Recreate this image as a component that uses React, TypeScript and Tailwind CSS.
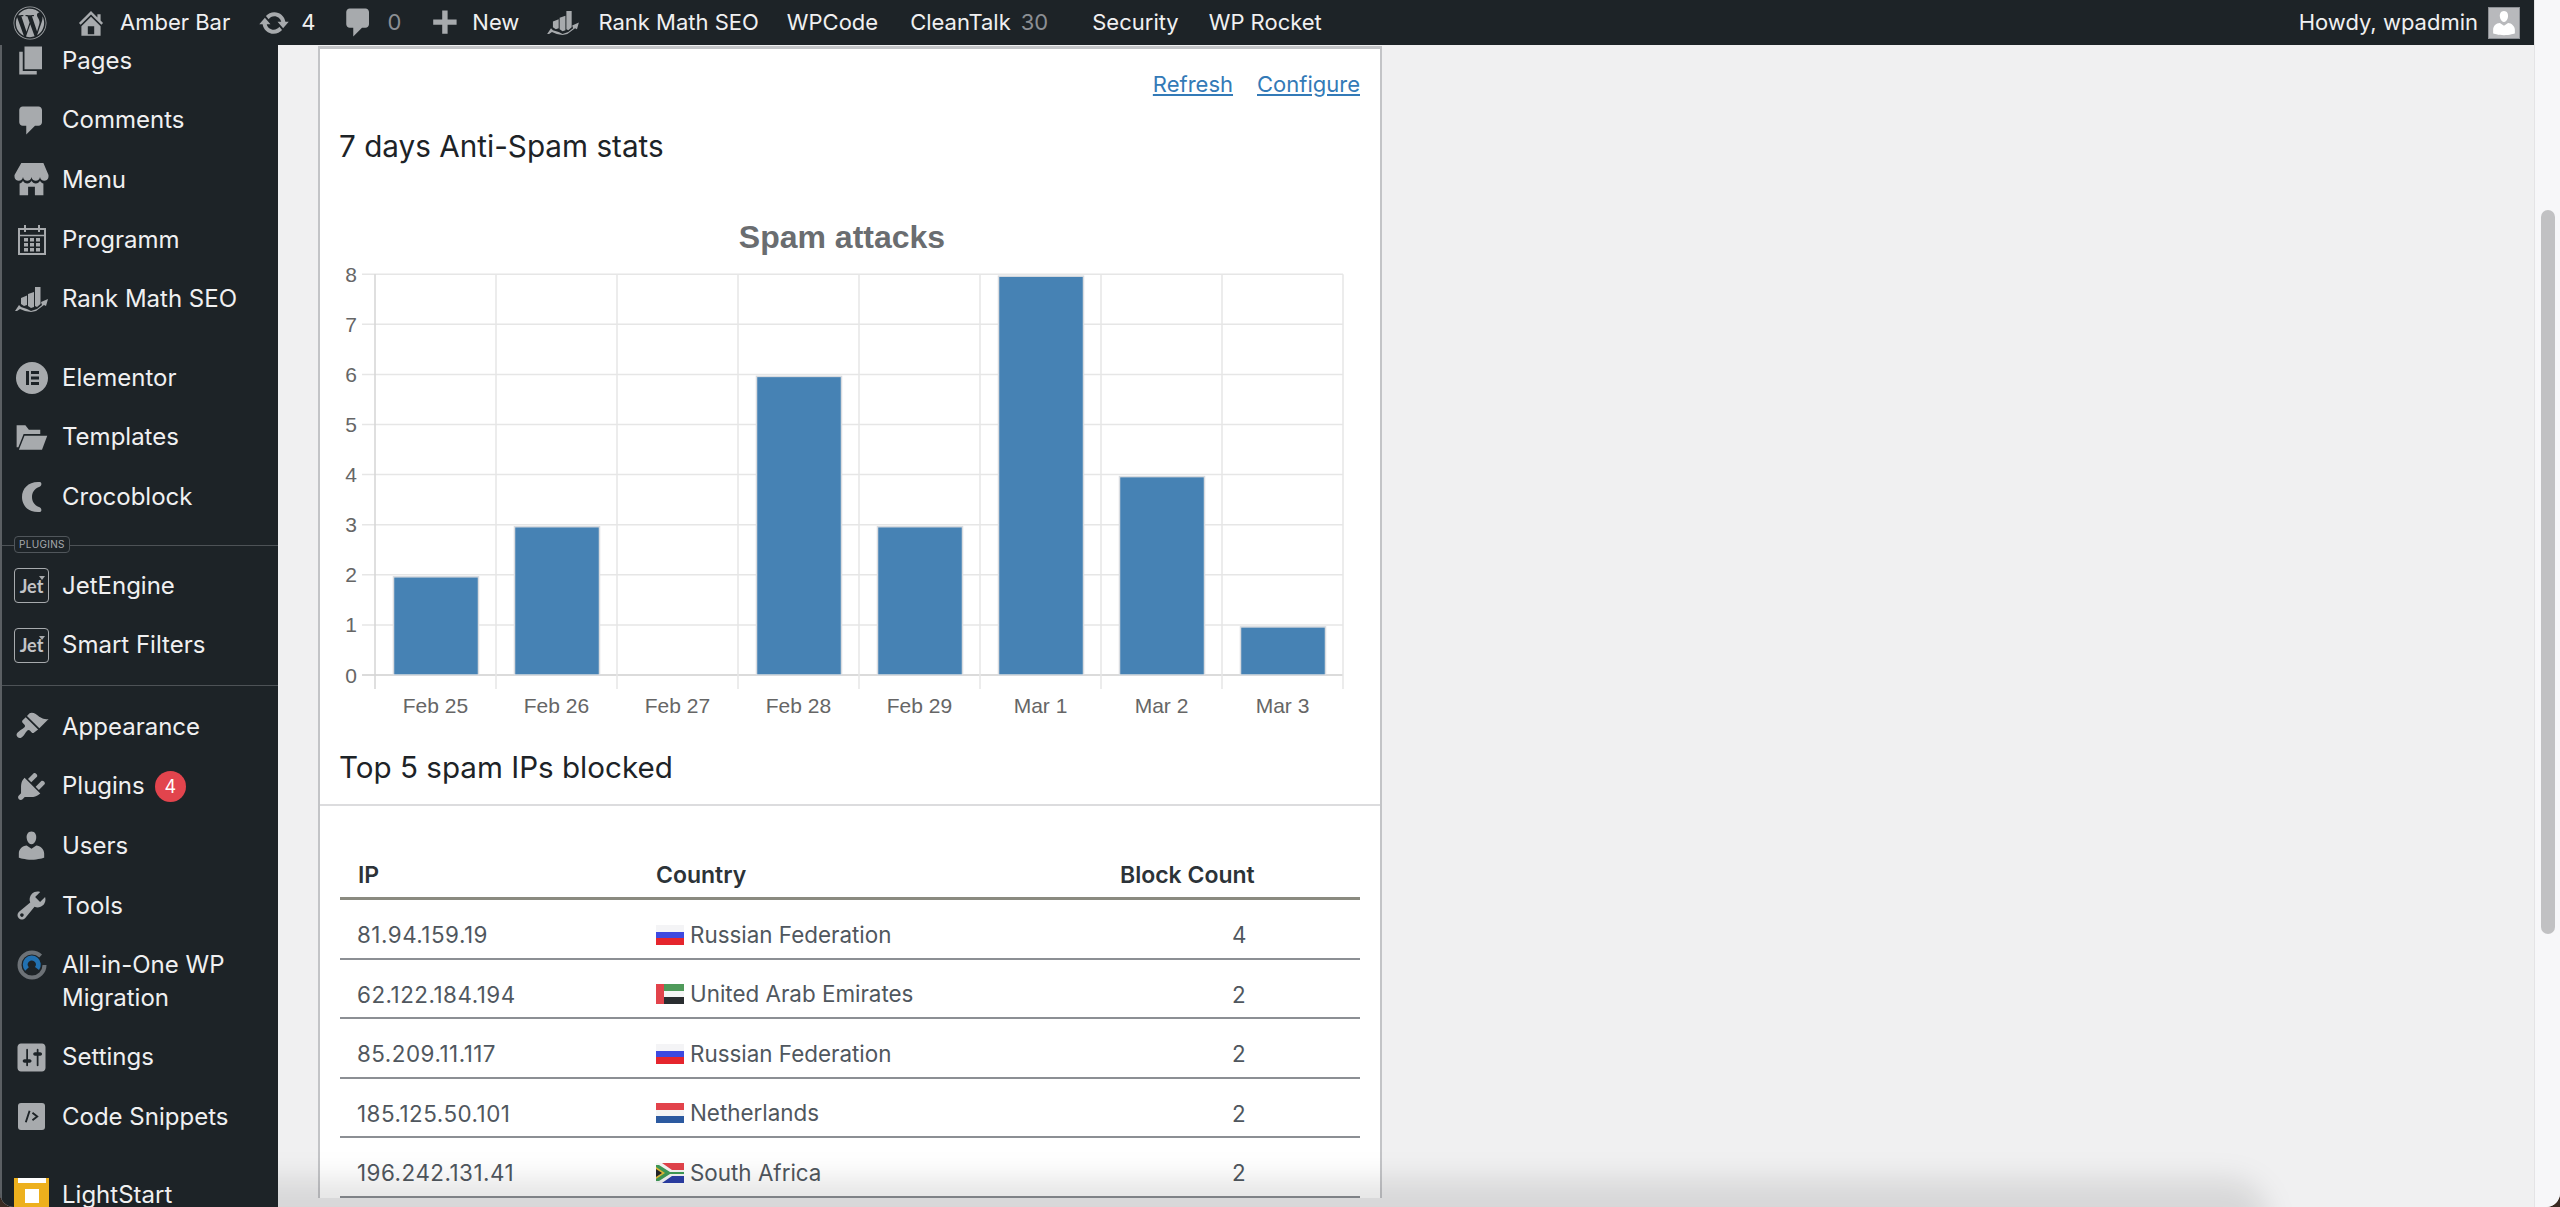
import { ReactNode } from "react";
import { FaWordpress } from "react-icons/fa";

const paths = {
  home: "M16 8.5l1.53 1.53-1.06 1.06L10 4.62l-6.47 6.47-1.06-1.06L10 2.5l4 4v-2h2v4zm-6-2.46l6 5.99V18H4v-5.97zM12 17v-5H8v5h4z",
  update:
    "M10.2 3.28c3.53 0 6.43 2.61 6.92 6h2.08l-3.5 4-3.5-4h2.32c-.45-1.97-2.21-3.45-4.32-3.45-1.45 0-2.73.71-3.54 1.78L4.95 5.66C6.23 4.2 8.11 3.28 10.2 3.28zm-.4 13.44c-3.52 0-6.43-2.61-6.92-6H.8l3.5-4c1.17 1.33 2.33 2.67 3.5 4H5.48c.45 1.97 2.21 3.45 4.32 3.45 1.45 0 2.73-.71 3.54-1.78l1.71 1.95c-1.28 1.46-3.15 2.38-5.25 2.38z",
  comment: "M5 2h9c1.1 0 2 .9 2 2v7c0 1.1-.9 2-2 2h-2l-5 5v-5H5c-1.1 0-2-.9-2-2V4c0-1.1.9-2 2-2z",
  plus: "M17 8v3h-5v5H9v-5H4V8h5V3h3v5h5z",
  page: "M6 15V2h10v13H6zm-1 1h8v2H3V5h2v11z",
  store:
    "M1 10c.41.29.96.43 1.5.43.55 0 1.09-.14 1.5-.43.62-.46 1-1.17 1-2 0 .83.37 1.54 1 2 .41.29.96.43 1.5.43.55 0 1.09-.14 1.5-.43.62-.46 1-1.17 1-2 0 .83.37 1.54 1 2 .41.29.96.43 1.51.43.54 0 1.08-.14 1.49-.43.62-.46 1-1.17 1-2 0 .83.37 1.54 1 2 .41.29.96.43 1.5.43.55 0 1.09-.14 1.5-.43.63-.46 1-1.17 1-2V7l-3-7H4L0 7v1c0 .83.37 1.54 1 2zm2 8.99h5v-5h4v5h5v-7c-.37-.05-.72-.22-1-.43-.63-.45-1-.73-1-1.56 0 .83-.38 1.11-1 1.56-.41.3-.95.43-1.49.44-.55 0-1.1-.14-1.51-.44-.63-.45-1-.73-1-1.56 0 .83-.38 1.11-1 1.56-.41.3-.95.43-1.5.44-.54 0-1.09-.14-1.5-.44-.63-.45-1-.73-1-1.57 0 .84-.38 1.12-1 1.57-.29.21-.63.38-1 .44v6.99z",
  brush:
    "M14.48 11.06L7.41 3.99l1.5-1.5c.5-.56 2.3-.47 3.51.32 1.21.8 1.43 1.28 2.91 2.1 1.18.64 2.45 1.26 4.45.85zm-.71.71L6.7 4.7 4.93 6.47c-.39.39-.39 1.02 0 1.41l1.06 1.06c.39.39.39 1.03 0 1.42-.6.6-1.43 1.11-2.21 1.69-.35.26-.7.53-1.01.84C1.43 13.71.99 15.01 2 16c1.01 1 2.29.57 3.1-.44.31-.31.59-.66.85-1.01.58-.78 1.09-1.61 1.69-2.21.39-.39 1.02-.39 1.41 0l1.06 1.06c.39.39 1.02.39 1.41 0z",
  plugin:
    "M13.11 4.36L9.87 7.6 8 5.73l3.24-3.24c.35-.34 1.05-.2 1.56.32.52.51.66 1.21.31 1.55zm-8 1.77l.91-1.12 9.01 9.01-1.19.84c-.71.71-2.63 1.16-3.82 1.16H6.14L4.9 17.26c-.59.59-1.54.59-2.12 0-.59-.58-.59-1.53 0-2.12l1.24-1.24v-3.88c0-1.13.4-3.19 1.09-3.89zm7.26 3.97l3.24-3.24c.34-.35 1.04-.21 1.55.31.52.51.66 1.21.31 1.55l-3.24 3.25z",
  users:
    "M10 9.25c-2.27 0-2.73-3.44-2.73-3.44C7 4.02 7.82 2 9.97 2c2.16 0 2.98 2.02 2.71 3.81 0 0-.41 3.44-2.68 3.44zm0 2.57L12.72 10c2.39 0 4.52 2.33 4.52 4.53v2.49s-3.65 1.13-7.24 1.13c-3.65 0-7.24-1.13-7.24-1.13v-2.49c0-2.25 1.94-4.48 4.47-4.48z",
  tools:
    "M16.68 9.77c-1.34 1.34-3.3 1.67-4.95.99l-5.41 6.52c-.99.99-2.59.99-3.58 0s-.99-2.59 0-3.57l6.52-5.42c-.68-1.65-.35-3.61.99-4.95 1.28-1.28 3.12-1.62 4.72-1.06l-2.89 2.89 2.82 2.82 2.86-2.87c.53 1.58.18 3.39-1.08 4.67zM3.81 16.21c.4.39 1.04.39 1.43 0 .4-.4.4-1.04 0-1.43-.39-.4-1.03-.4-1.43 0-.39.39-.39 1.03 0 1.43z",
  settings:
    "M18 16V4c0-1.1-.9-2-2-2H4c-1.1 0-2 .9-2 2v12c0 1.1.9 2 2 2h12c1.1 0 2-.9 2-2zM8 11h1c.55 0 1 .45 1 1s-.45 1-1 1H8v1.5c0 .28-.22.5-.5.5s-.5-.22-.5-.5V13H6c-.55 0-1-.45-1-1s.45-1 1-1h1V5.5c0-.28.22-.5.5-.5s.5.22.5.5V11zm5-2h-1c-.55 0-1-.45-1-1s.45-1 1-1h1V5.5c0-.28.22-.5.5-.5s.5.22.5.5V7h1c.55 0 1 .45 1 1s-.45 1-1 1h-1v5.5c0 .28-.22.5-.5.5s-.5-.22-.5-.5V9z",
  folder: "M1.5 3h5l2 2.5h6.5V8H5.5L2.5 15.5H1.5V3zM6 9h13l-3 8H2.8L6 9z",
};

function Dash({ d, className }: { d: string; className: string }) {
  return (
    <svg viewBox="0 0 20 20" className={className} fill="currentColor">
      <path d={d} />
    </svg>
  );
}

function RankIcon({ className }: { className: string }) {
  return (
    <svg viewBox="0 0 34 26" className={className} fill="currentColor">
      <path d="M6 12l6-2.500V19l-3 1-3-2zM13 8l6-2v15l-3 1-3-2zM20 1h5.500v17L22 21l-2-1z" />
      <path d="M0 25l4-6 2 2 6 2 4 2 6-2 5-4-1-3 7-3-2 7-2-1-8 6-5 1-6-1-5-2-3 2z" />
    </svg>
  );
}

function CalendarIcon() {
  return (
    <svg viewBox="0 0 28 30" className="w-[28px] h-[30px]" fill="none" stroke="currentColor">
      <rect x="1" y="4" width="26" height="25" strokeWidth="2" />
      <path d="M7 0v7M21 0v7" strokeWidth="2" />
      <path d="M1 10.500h26" strokeWidth="1.500" />
      <g fill="currentColor" stroke="none">
        <rect x="6" y="13" width="4" height="3.500" />
        <rect x="12" y="13" width="4" height="3.500" />
        <rect x="18" y="13" width="4" height="3.500" />
        <rect x="6" y="18" width="4" height="3.500" />
        <rect x="12" y="18" width="4" height="3.500" />
        <rect x="18" y="18" width="4" height="3.500" />
        <rect x="6" y="23" width="4" height="3.500" />
        <rect x="12" y="23" width="4" height="3.500" />
        <rect x="18" y="23" width="4" height="3.500" />
      </g>
    </svg>
  );
}

function JetIcon() {
  return (
    <div className="relative w-[35px] h-[35px] rounded-[4px] border-[1.5px] border-[#a7aaad] flex items-center justify-center font-['Lato',sans-serif] text-[18px] leading-none font-bold text-[#c3c4c7]">
      Jet
      <span className="absolute right-[3px] top-[7px] w-0 h-0 border-x-[3px] border-t-[4px] border-x-transparent border-t-[#a7aaad]" />
    </div>
  );
}

function MigrationIcon() {
  return (
    <svg viewBox="0 0 30 32" className="w-[30px] h-[32px]" fill="none">
      <circle cx="15" cy="17" r="12.500" stroke="#6d7277" strokeWidth="4" strokeDasharray="68 11" />
      <path d="M10 21a6.500 6.500 0 1 1 10-.5" stroke="#2271b1" strokeWidth="5" />
    </svg>
  );
}

function CodeIcon() {
  return (
    <div className="w-[27px] h-[27px] rounded-[3px] bg-[#a7aaad] flex items-center justify-center">
      <svg viewBox="0 0 20 20" className="w-[19px] h-[19px]" fill="none" stroke="#1d2327" strokeWidth="2">
        <path d="M8 4L4 16M11 6l5 4-5 4" />
      </svg>
    </div>
  );
}

function ElementorIcon() {
  return (
    <svg viewBox="0 0 32 32" className="w-[32px] h-[32px]">
      <circle cx="16" cy="16" r="16" fill="#a7aaad" />
      <path d="M10 9h3v14h-3zM15 9h8v3h-8zM15 14.500h8v3h-8zM15 20h8v3h-8z" fill="#1d2327" />
    </svg>
  );
}

function CrocoIcon() {
  return (
    <svg viewBox="0 0 21 32" className="w-[21px] h-[32px]" fill="currentColor">
      <path d="M19 1C8 0 1 7 1 16c0 9 7 16 18 15 2-.5 2-4-1-5-5-2-7-6-7-10s2-8 7-10c3-1 3-4.500 1-5z" />
    </svg>
  );
}

function LightStartIcon() {
  return (
    <div className="w-[35px] h-[35px] shrink-0 bg-[#edb01d] flex flex-col items-center">
      <div className="w-[28px] h-[5px] bg-white" />
      <div className="w-[14px] h-[14px] bg-white mt-[6px]" />
    </div>
  );
}

type MenuRow = { label: ReactNode; icon: ReactNode; tall?: boolean };

const icon35 = "w-[35px] h-[35px]";

const groupA: MenuRow[] = [
  { label: "Pages", icon: <Dash d={paths.page} className={icon35} /> },
  { label: "Comments", icon: <Dash d={paths.comment} className={icon35} /> },
  { label: "Menu", icon: <Dash d={paths.store} className="w-[36px] h-[34px]" /> },
  { label: "Programm", icon: <CalendarIcon /> },
  { label: "Rank Math SEO", icon: <RankIcon className="w-[34px] h-[26px]" /> },
];

const groupB: MenuRow[] = [
  { label: "Elementor", icon: <ElementorIcon /> },
  { label: "Templates", icon: <Dash d={paths.folder} className={icon35} /> },
  { label: "Crocoblock", icon: <CrocoIcon /> },
];

const groupC: MenuRow[] = [
  { label: "JetEngine", icon: <JetIcon /> },
  { label: "Smart Filters", icon: <JetIcon /> },
];

const groupD: MenuRow[] = [
  { label: "Appearance", icon: <Dash d={paths.brush} className={icon35} /> },
  {
    label: (
      <span className="flex items-center gap-[10px]">
        Plugins
        <span className="w-[31px] h-[31px] rounded-full bg-[#e2444d] text-white text-[18px] flex items-center justify-center">
          4
        </span>
      </span>
    ),
    icon: <Dash d={paths.plugin} className={icon35} />,
  },
  { label: "Users", icon: <Dash d={paths.users} className={icon35} /> },
  { label: "Tools", icon: <Dash d={paths.tools} className={icon35} /> },
  {
    label: (
      <span className="block leading-[33px]">
        All-in-One WP
        <br />
        Migration
      </span>
    ),
    icon: <MigrationIcon />,
    tall: true,
  },
  { label: "Settings", icon: <Dash d={paths.settings} className={icon35} /> },
  { label: "Code Snippets", icon: <CodeIcon /> },
];

function Row({ row }: { row: MenuRow }) {
  return (
    <div className={row.tall ? "flex items-start h-[92px] pt-[13px]" : "flex items-center h-[59.6px]"}>
      <div className="w-[35px] shrink-0 flex justify-center text-[#a7aaad]">{row.icon}</div>
      <div className="ml-[13px] text-[24px] text-[#f0f0f1] whitespace-nowrap">{row.label}</div>
    </div>
  );
}

function Sidebar() {
  return (
    <aside className="w-[278px] shrink-0 h-full bg-[#1d2327] border-l-2 border-[#5b5f63] overflow-hidden">
      <div className="-mt-[14px] pl-[12px]">
        {groupA.map((r, i) => (
          <Row key={i} row={r} />
        ))}
      </div>
      <div className="mt-[19px] pl-[12px]">
        {groupB.map((r, i) => (
          <Row key={i} row={r} />
        ))}
      </div>
      <div className="relative h-px bg-[#4d5256] mt-[18px]">
        <span className="absolute left-[12px] -top-[9px] h-[17px] px-[4px] rounded-[4px] border border-[#50565b] bg-[#1d2327] text-[10px] leading-[15px] tracking-[0.3px] text-[#a7aaad]">
          PLUGINS
        </span>
      </div>
      <div className="mt-[10px] pl-[12px]">
        {groupC.map((r, i) => (
          <Row key={i} row={r} />
        ))}
      </div>
      <div className="h-px bg-[#4d5256] mt-[10px]" />
      <div className="mt-[11px] pl-[12px]">
        {groupD.map((r, i) => (
          <Row key={i} row={r} />
        ))}
        <div className="flex items-start mt-[31px]">
          <LightStartIcon />
          <div className="ml-[13px] mt-[4px] text-[24px] leading-[26px] text-[#f0f0f1]">LightStart</div>
        </div>
      </div>
    </aside>
  );
}

function TopBar() {
  return (
    <header className="relative z-10 h-[45px] shrink-0 bg-[#1d2327] flex items-center text-[22px] text-[#f0f0f1] whitespace-nowrap">
      <FaWordpress className="ml-[13px] w-[34px] h-[34px] text-[#a7aaad]" />
      <Dash d={paths.home} className="ml-[28px] w-8 h-8 text-[#a7aaad]" />
      <span className="ml-[13px]">Amber Bar</span>
      <Dash d={paths.update} className="ml-[28px] w-8 h-8 text-[#a7aaad]" />
      <span className="ml-[11px]">4</span>
      <Dash d={paths.comment} className="ml-[26px] w-[35px] h-[35px] text-[#a7aaad]" />
      <span className="ml-[11px] text-[#8c8f94]">0</span>
      <Dash d={paths.plus} className="ml-[25px] w-[36px] h-[36px] text-[#a7aaad]" />
      <span className="ml-[10px]">New</span>
      <RankIcon className="ml-[28px] w-[33px] h-[25px] text-[#a7aaad]" />
      <span className="ml-[18px]">Rank Math SEO</span>
      <span className="ml-[28px]">WPCode</span>
      <span className="ml-[32px]">CleanTalk</span>
      <span className="ml-[10px] text-[#8c8f94]">30</span>
      <span className="ml-[44px]">Security</span>
      <span className="ml-[30px]">WP Rocket</span>
      <span className="ml-auto">Howdy, wpadmin</span>
      <div className="ml-[10px] mr-[14px] w-[32px] h-[32px] bg-[#b8b9bc] border border-[#8c8f94] flex items-end justify-center overflow-hidden">
        <Dash d={paths.users} className="w-[30px] h-[30px] text-white" />
      </div>
    </header>
  );
}

const bars = [
  { label: "Feb 25", value: 2 },
  { label: "Feb 26", value: 3 },
  { label: "Feb 27", value: 0 },
  { label: "Feb 28", value: 6 },
  { label: "Feb 29", value: 3 },
  { label: "Mar 1", value: 8 },
  { label: "Mar 2", value: 4 },
  { label: "Mar 3", value: 1 },
];

function Chart() {
  // svg origin sits at page (340, 210)
  const left = 35;
  const zero = 465;
  const step = 50.1;
  const col = 121;
  return (
    <svg width="1024" height="520" className="block font-['Liberation_Sans',sans-serif]">
      <text x="502" y="38" textAnchor="middle" fontSize="32" fontWeight="700" fill="#6a6d70">
        Spam attacks
      </text>
      {Array.from({ length: 9 }).map((_, i) => (
        <g key={i}>
          <line x1="22" x2={left + col * 8} y1={zero - step * i} y2={zero - step * i} stroke={i === 0 ? "#cfcfcf" : "#e6e6e6"} strokeWidth="1.500" />
          <text x="11" y={zero - step * i + 7.5} textAnchor="middle" fontSize="21" fill="#666">
            {i}
          </text>
        </g>
      ))}
      {Array.from({ length: 9 }).map((_, i) => (
        <line key={i} x1={left + col * i} x2={left + col * i} y1={zero - step * 8} y2={zero + 14} stroke={i === 0 ? "#d4d4d4" : "#e6e6e6"} strokeWidth="1.500" />
      ))}
      {bars.map((b, i) => (
        <g key={b.label}>
          {b.value > 0 && (
            <rect x={left + 18.5 + col * i} y={zero - step * b.value + 2} width="85" height={step * b.value - 2} fill="#4682b4" stroke="#d9dce0" strokeWidth="1.500" />
          )}
          <text x={left + 60.5 + col * i} y="503" textAnchor="middle" fontSize="21" fill="#666">
            {b.label}
          </text>
        </g>
      ))}
    </svg>
  );
}

function Flag({ code }: { code: string }) {
  let body: ReactNode = null;
  if (code === "ru")
    body = (
      <>
        <rect width="28" height="7" fill="#f4f4f6" />
        <rect y="7" width="28" height="6" fill="#3d49e0" />
        <rect y="13" width="28" height="7" fill="#e5252d" />
      </>
    );
  if (code === "nl")
    body = (
      <>
        <rect width="28" height="7" fill="#e2434b" />
        <rect y="7" width="28" height="6" fill="#f5f5f5" />
        <rect y="13" width="28" height="7" fill="#2c5aa0" />
      </>
    );
  if (code === "ae")
    body = (
      <>
        <rect width="28" height="7" fill="#4f9a5a" />
        <rect y="7" width="28" height="6" fill="#f5f5f5" />
        <rect y="13" width="28" height="7" fill="#2a2d30" />
        <rect width="8" height="20" fill="#e2434b" />
      </>
    );
  if (code === "za")
    body = (
      <>
        <rect width="28" height="10" fill="#e2434b" />
        <rect y="10" width="28" height="10" fill="#2c3fa8" />
        <path d="M0 0h6l10 7h12v6H16L6 20H0z" fill="#f5f5f5" />
        <path d="M0 2h3l11 7h14v2H14L3 18H0z" fill="#3f9a57" />
        <path d="M0 4l9 6-9 6z" fill="#e0b93a" />
        <path d="M0 6l6 4-6 4z" fill="#22252a" />
      </>
    );
  return (
    <svg width="28" height="20" viewBox="0 0 28 20" className="shrink-0">
      {body}
    </svg>
  );
}

const rows = [
  { ip: "81.94.159.19", code: "ru", country: "Russian Federation", count: 4 },
  { ip: "62.122.184.194", code: "ae", country: "United Arab Emirates", count: 2 },
  { ip: "85.209.11.117", code: "ru", country: "Russian Federation", count: 2 },
  { ip: "185.125.50.101", code: "nl", country: "Netherlands", count: 2 },
  { ip: "196.242.131.41", code: "za", country: "South Africa", count: 2 },
];

function IpTable() {
  return (
    <div className="ml-[20px] mr-[20px] text-[22.4px]">
      <div className="grid grid-cols-[298px_464px_1fr] h-[42px] border-b-[3px] border-[#8a8a80] text-[23px] font-semibold text-[#2c3338] items-start">
        <div className="pl-[18px]">IP</div>
        <div className="pl-[18px]">Country</div>
        <div className="pl-[18px]">Block Count</div>
      </div>
      {rows.map((r) => (
        <div key={r.ip} className="grid grid-cols-[298px_464px_1fr] h-[59.6px] border-b-2 border-[#8c8f94] pt-[18px] text-[#50575e]">
          <div className="pl-[17px] tracking-[0.5px]">{r.ip}</div>
          <div className="pl-[18px] flex items-center h-[33px] gap-[6px]">
            <Flag code={r.code} />
            {r.country}
          </div>
          <div className="pl-[130px]">{r.count}</div>
        </div>
      ))}
    </div>
  );
}

function Card() {
  return (
    <section className="ml-[40px] mt-[1px] w-[1064px] bg-white border-x-2 border-t-[3px] border-[#c3c4c7]">
      <div className="flex justify-end gap-[24px] pr-[20px] pt-[20px] text-[22px] leading-[30px] text-[#337ab7] underline">
        <span>Refresh</span>
        <span>Configure</span>
      </div>
      <h2 className="ml-[19px] mt-[27px] text-[29.7px] leading-[40px] text-[#1d2327]">7 days Anti-Spam stats</h2>
      <div className="ml-[20px] mt-[44px]">
        <Chart />
      </div>
      <h2 className="ml-[19px] mt-[17px] text-[29.6px] leading-[40px] text-[#1d2327]">Top 5 spam IPs blocked</h2>
      <div className="h-[2px] bg-[#dcdcde] mt-[17px]" />
      <div className="pt-[52px]">
        <IpTable />
      </div>
    </section>
  );
}

export default function App() {
  return (
    <div className="w-[2560px] h-[1207px] bg-[#3a2a22] overflow-hidden font-['Inter','Noto_Sans',sans-serif]">
      <div className="relative flex w-full h-full rounded-b-[14px] overflow-hidden bg-[#f0f0f1]">
        <div className="flex flex-col w-[2534px] h-full">
          <TopBar />
          <div className="flex flex-1 min-h-0">
            <Sidebar />
            <main className="flex-1 overflow-hidden">
              <Card />
            </main>
          </div>
        </div>
        {/* scrollbar */}
        <div className="w-[26px] h-full bg-[#f7f7f9] border-l border-[#e4e4e6] pt-[210px] pl-[6px]">
          <div className="w-[14px] h-[724px] rounded-full bg-[#c1c1c3]" />
        </div>
        {/* dock shadow along the bottom */}
        <div className="absolute left-[278px] right-[26px] bottom-0 h-[60px] overflow-hidden pointer-events-none">
          <div className="absolute -left-[60px] top-[32px] w-[2050px] h-[100px] rounded-tr-[40px] bg-black/10 blur-[14px]" />
        </div>
      </div>
    </div>
  );
}
